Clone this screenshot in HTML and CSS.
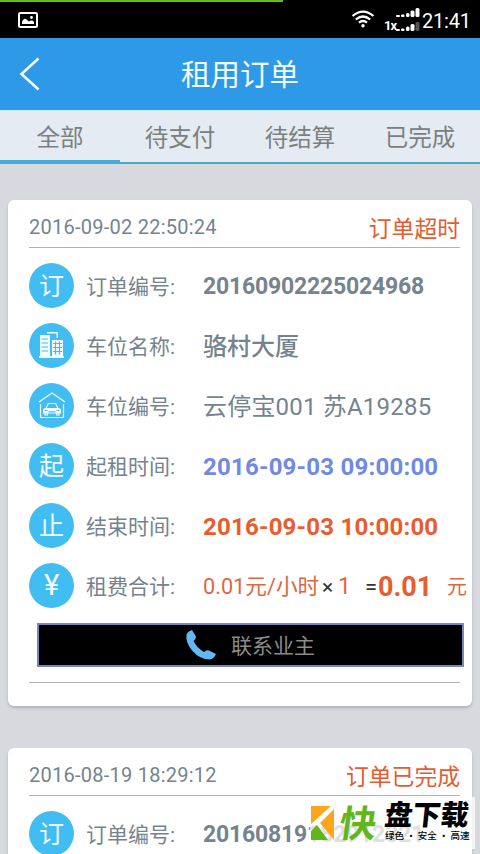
FILE: index.html
```html
<!DOCTYPE html>
<html lang="zh-CN">
<head>
<meta charset="utf-8">
<title>租用订单</title>
<link rel="stylesheet" href="styles.css">
</head>
<body>
<div class="status">
  <div class="progress"></div>
  <svg class="pic" width="20" height="16" viewBox="0 0 20 16"><rect x="1" y="1" width="18" height="14" rx="1.5" fill="none" stroke="#fff" stroke-width="2"/><path d="M4 12V9.5Q6.500 5 9 8L11 9.500Q13.500 7.500 16 10V12Z" fill="#fff"/><circle cx="13.500" cy="5.500" r="1.400" fill="#fff"/></svg>
  <div class="sys">
    <svg class="wifi" width="24" height="18" viewBox="0 0 24 18" fill="none" stroke="#fff" stroke-width="2.200"><path d="M1.500 6Q12-2.800 22.500 6M4.800 9.500Q12 3.500 19.200 9.500M8 12.600Q12 9.400 16 12.600"/><circle cx="12" cy="15.700" r="1.700" fill="#fff" stroke="none"/></svg>
    <span class="onex">1x</span>
    <svg class="signal" width="26" height="24" viewBox="0 0 26 24" fill="#fff"><rect x="0" y="7" width="4" height="2" rx="1"/><rect x="5" y="6.500" width="3.500" height="2.500" rx="1"/><rect x="10" y="5" width="3.500" height="4" rx="1.500"/><rect x="14.500" y="2.500" width="4" height="6.500" rx="1.500"/><rect x="19.500" y="0" width="4" height="9" rx="1.500"/><rect x="0" y="21" width="4" height="2" rx="1"/><rect x="5" y="20.500" width="3.500" height="2.500" rx="1"/><rect x="10" y="18.500" width="3.500" height="4.500" rx="1.500"/><rect x="14.500" y="16" width="4" height="7" rx="1.500"/><rect x="19.500" y="14" width="4" height="9" rx="1.500" fill="#555"/></svg>
    <span class="clock">21:41</span>
  </div>
</div>
<header class="bar">
  <svg class="back" width="22" height="34" viewBox="0 0 22 34" fill="none" stroke="#f2fcff" stroke-width="2.600"><path d="M19.500 1.500 2.500 17 19.500 32.500"/></svg>
  <h1>租用订单</h1>
</header>
<nav class="tabs">
  <span class="tab active">全部</span><span class="tab">待支付</span><span class="tab">待结算</span><span class="tab">已完成</span>
</nav>
<main>
  <section class="card">
    <div class="head"><span class="date">2016-09-02 22:50:24</span><span class="state">订单超时</span></div>
    <div class="row"><i class="dot">订</i><span class="label">订单编号:</span><b class="num">20160902225024968</b></div>
    <div class="row"><i class="dot"><svg width="25" height="28" viewBox="0 0 25 28"><path fill="#f2fcff" d="M1 4h10v21H1zM0 25h25v2H0zM13 9h11v16H13zM8 1h11v6h-1.500V2.500H8z"/><path stroke="#41bdf2" stroke-width="1.200" d="M2.500 8H9M2.500 12H9M2.500 16H9M2.500 20H9M14 12.500h9M14 16.500h9M14 20.500h9M16.500 10.500v13M20.500 10.500v13"/></svg></i><span class="label">车位名称:</span><span class="text medium">骆村大厦</span></div>
    <div class="row"><i class="dot"><svg width="28" height="28" viewBox="0 0 28 28" fill="none" stroke="#f2fcff" stroke-width="1.200"><path d="M1 11 14 2l13 9M2.500 13v13.500h23V13M8 17.500l2.300-5h7.400l2.300 5"/><path d="M7.500 17.500h13q2 0 2 2V22h-17v-2.500q0-2 2-2z" fill="#f2fcff"/><path d="M7 22v2h2.500v-2M18.500 22v2H21v-2"/><path stroke="#41bdf2" d="M7 19.500h2.500M18.500 19.500H21M10.500 20.800h7"/></svg></i><span class="label">车位编号:</span><span class="text plate">云停宝001 苏A19285</span></div>
    <div class="row"><i class="dot">起</i><span class="label">起租时间:</span><b class="time blue">2016-09-03 09:00:00</b></div>
    <div class="row"><i class="dot">止</i><span class="label">结束时间:</span><b class="time orange">2016-09-03 10:00:00</b></div>
    <div class="row"><i class="dot yen">¥</i><span class="label">租费合计:</span><span class="price"><span class="rate">0.01元/小时</span><span class="times">×</span><span class="qty">1</span><span class="eq">=</span><b class="total">0.01</b><span class="unit">元</span></span></div>
    <div class="call"><svg width="32" height="32" viewBox="0 0 32 32"><path fill="#62b8f3" d="M7 1 11 7.500Q11 10 8.500 12 11.500 18.500 19 23 21.500 20.500 24 21.500L31 25Q29 30 24.500 30.500 15 30.500 7.500 22 0 13 1.500 5.500 3 2 7 1Z"/></svg><span>联系业主</span></div>
    <div class="end"></div>
  </section>
  <section class="card last">
    <div class="head"><span class="date">2016-08-19 18:29:12</span><span class="state">订单已完成</span></div>
    <div class="row"><i class="dot">订</i><span class="label">订单编号:</span><b class="num">20160819182912321</b></div>
  </section>
</main>
<div class="mark">
  <svg width="23" height="34" viewBox="0 0 23 34"><path fill="#ffa51c" d="M0 0h20L0 18zM23 3v31L9 17z"/><path fill="#62b51d" d="M0 34V25L6 19 17 34z"/></svg>
  <span class="kuai">快</span>
  <div class="brand"><b>盘下载</b><small>绿色 · 安全 · 高速</small></div>
</div>
</body>
</html>
```

FILE: styles.css
```css
* { box-sizing: border-box; }
html, body { height: 854px; overflow: hidden; }
body { position: relative; margin: 0; width: 480px; background: #d7d9df; color: #75838f; font-family: Roboto, "Noto Sans CJK SC", sans-serif; display: flex; flex-direction: column; }
span, b, i { white-space: nowrap; }
main { flex: none; height: 690px; overflow: hidden; }
.status { flex: none; height: 38px; background: #000; display: grid; grid-template: 2px 36px / 1fr auto; color: #fff; }
.progress { grid-column: 1 / 3; width: 283px; background: #62bd20; }
.pic { margin: 10px 0 0 18px; }
.sys { display: flex; align-items: flex-start; }
.wifi { margin: 8px 1px 0 -1px; }
.onex { width: 12px; margin: 14px 0 0 8px; font: bold 13px/20px Roboto, sans-serif; letter-spacing: -1px; }
.signal { margin-top: 6px; }
.clock { width: 58px; padding-left: 0; font-size: 20px; line-height: 38px; letter-spacing: -.2px; }
.bar { flex: none; height: 72px; background: #2d99e7; display: grid; grid-template-columns: 60px 360px 60px; align-items: center; color: #f2fcff; }
.back { margin-left: 19px; }
h1 { margin: 0; padding-top: 2px; text-align: center; font-size: 29.500px; line-height: 70px; font-weight: 400; }
.tabs { flex: none; height: 54px; display: grid; grid-template-columns: repeat(4, 120px); grid-template-rows: 53px; background: #e5ebf2; border-top: 1px solid #c4edfa; }
.tab { height: 53px; border-bottom: 2px solid #4ba9bd; text-align: center; font-size: 23.500px; line-height: 54px; color: #7b807f; }
.tab.active { border-bottom: 4px solid #42abd7; }
.card { width: 464px; height: 506px; margin: 36px 8px 42px; padding: 0 12px 0 21px; background: #fff; border-radius: 6px; box-shadow: 0 2px 3px #aeb1b8; }
.card.last { margin: 0 8px; height: 106px; border-radius: 6px 6px 0 0; overflow: hidden; }
.head { height: 48px; border-bottom: 1px solid #b1b3b5; margin-bottom: 7px; display: flex; justify-content: space-between; }
.date { font-size: 20px; line-height: 54px; letter-spacing: .25px; }
.state { color: #e45c31; font-size: 22.800px; line-height: 59px; }
.row { height: 60px; display: grid; grid-template-columns: 58px 116px 1fr; grid-template-rows: 60px; align-items: center; }
.dot { width: 45px; height: 45px; border-radius: 50%; background: #41bdf2; color: #f2fcff; font: normal 25px/42px "Noto Sans CJK SC", sans-serif; display: flex; align-items: center; justify-content: center; }
.dot:not(:has(svg)) { padding-bottom: 3px; }
.dot.yen { font: 29px/45px Roboto, sans-serif; padding: 1px 0 0; }
.label { font-size: 21px; line-height: 60px; padding-top: 4px; margin-left: -1px; }
.num { font-size: 23px; line-height: 60px; letter-spacing: -.2px; padding-top: 4px; }
.text { font-size: 24px; line-height: 60px; padding-top: 4px; }
.plate { letter-spacing: .2px; }
.medium { font-weight: 500; }
.time { font-size: 24px; line-height: 60px; letter-spacing: .22px; padding-top: 4px; }
.blue { color: #6f89e4; }
.orange { color: #e85c2e; }
.price { display: flex; line-height: 60px; padding-top: 4px; color: #dd6841; font-size: 23px; }
.rate { width: 119px; font-size: 21.700px; }
.times { width: 16px; color: #333; font-size: 21px; }
.qty { width: 27px; }
.eq { width: 13px; color: #333; font-size: 22px; }
.total { width: 69px; color: #e85c2e; font-size: 27px; }
.unit { font-size: 20px; }
.call { width: 427px; height: 44px; margin: 8px 0 0 8px; border: 2px solid #7488bd; background: #000; display: flex; align-items: center; color: #8a8a8a; font-size: 21px; }
.call svg { margin: 0 14px 0 146px; }
.call span { margin-top: -2px; }
.end { height: 16px; border-bottom: 1px solid #b1b3b5; }
.mark { position: absolute; left: 310px; top: 797px; width: 165px; height: 52px; background: rgba(255,255,255,.75); display: flex; align-items: flex-start; font-family: "Noto Sans CJK SC", sans-serif; }
.mark svg { flex: none; margin: 9px 0 0 1px; }
.kuai { margin-left: 6px; color: #62b51d; font-size: 37px; font-weight: 700; line-height: 48px; transform: skewX(-8deg); }
.brand { margin-left: 8px; display: flex; flex-direction: column; color: #000; }
.brand b { font-size: 28px; font-weight: 900; line-height: 33px; transform: skewX(-6deg); }
.brand small { font-size: 9.500px; line-height: 11px; font-weight: 500; white-space: nowrap; }
```
